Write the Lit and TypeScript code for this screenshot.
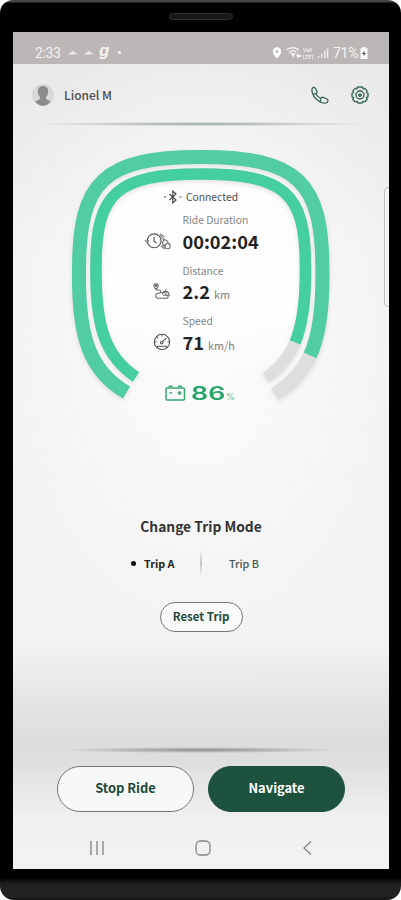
import { LitElement, html, svg, css } from "lit";
import { customElement, property } from "lit/decorators.js";

const durationIcon = svg`
  <svg width="28" height="19" viewBox="0 0 28 19" fill="none" stroke="#777" stroke-width="1.100">
    <circle cx="10.500" cy="8.800" r="7.200" stroke="#555"/><path stroke="#444" d="M10.500 4.500v4.800l2.500 2"/>
    <path d="M.8 8.200l2.400 2.400 2-2.600M17 3l4 5M16.500 1.500l5 3.500M20 7l4 2 2 4M18.500 9.500l2 5M20 6.500v4"/>
    <circle cx="24.500" cy="14.200" r="2.800"/><path d="M18 14.500l3 2.500 1.500-4z"/>
  </svg>`;
const distanceIcon = svg`
  <svg width="18" height="18" viewBox="0 0 18 18" fill="none" stroke="#666" stroke-width="1.100">
    <path d="M3 6.500C1.300 4.800 1 4 1 3a2 2 0 0 1 4.200 0c0 1-.6 2-2.200 3.500z"/><circle cx="3.100" cy="3" r=".6"/>
    <path d="M3.500 7h2.800c2 0 2 3.300-.3 3.300H4.800c-2.500 0-2.500 5 0 5h8.400c2.300 0 2.300-1.800 1.300-3"/>
    <path d="M9.500 11.500a3.200 3.200 0 0 1 6.400 0M8.500 9.500h3l1.500-3M10 12.300h7M13 8v4"/>
  </svg>`;
const speedIcon = svg`
  <svg width="18" height="18" viewBox="0 0 18 18" fill="none" stroke="#555" stroke-width="1.100">
    <circle cx="9" cy="9" r="7.700"/><circle cx="8.600" cy="9.700" r="1.200"/>
    <path d="M9.500 8.800l4-4M4.500 15v-1.800h9V15M9 1.500v2M1.500 9h2M14.500 9h2M3.800 3.800l1.300 1.300"/>
  </svg>`;

@customElement("status-bar")
class StatusBar extends LitElement {
  static styles = css`
    :host { display: flex; height: 32px; box-sizing: border-box; padding: 8px 21px 0 22px; background: #bbb7b6;
      color: #f5f3f2; font: 14px/24px Roboto, sans-serif; justify-content: space-between; }
    .side { display: flex; align-items: center; height: 26px; }
    .time { letter-spacing: -0.4px; width: 32px; }
    .g { font: italic 700 17px/20px "Liberation Sans", sans-serif; width: 19px; margin-top: -5px; }
    .dot { width: 3px; height: 3px; border-radius: 50%; background: #f8f6f5; margin-top: -1px; }
    .net { display: flex; flex-direction: column; gap: 1px; font: 700 5px/6px Roboto, sans-serif; margin-left: -1px; width: 15px; opacity: .9; }
    .pct { margin: 0 1px 0 4px; letter-spacing: -0.3px; width: 26px; }
  `;
  render() {
    const bird = svg`<svg width="16" height="10" viewBox="0 0 16 10" fill="#f2f0ef"><path d="M0 6.500L3.500 5 6 2.600l.8 2 2.700.2v1.500z"/></svg>`;
    return html`
      <div class="side"><span class="time">2:33</span>${bird}${bird}<span class="g">g</span><i class="dot"></i></div>
      <div class="side">
        <svg width="10" height="14" viewBox="0 0 10 14"><path fill="#fff" fill-rule="evenodd" d="M5 1.200A4.200 4.200 0 0 0 .8 5.400C.8 8.300 5 12.500 5 12.500s4.200-4.200 4.200-7.100A4.200 4.200 0 0 0 5 1.200zm0 2.700a1.500 1.500 0 1 1 0 3 1.500 1.500 0 0 1 0-3z"/></svg>
        <svg width="22" height="14" viewBox="0 0 22 14" fill="none" stroke="#f3f1f0" stroke-width="1.400"><path d="M4.500 4c3.500-3 9-3 12.500 0M7 6.300c2.500-2 5-2 7.500 0"/><path fill="#f3f1f0" stroke="none" d="M8 7l5.500 0-2 4.500zM14 9.500l2.500-2.500v2h3v2h-3v2z"/></svg>
        <span class="net"><span>VoII</span><span>LTE1</span></span>
        <svg width="11" height="12" viewBox="0 0 11 12" fill="#e9e7e6"><path d="M0 9h1.500v2H0zM3 7h1.500v4H3zM6 4h1.500v7H6zM8.700 1.500h1.600V11H8.700z"/></svg>
        <span class="pct">71%</span>
        <svg width="8" height="12" viewBox="0 0 8 12"><path fill="#fff" d="M2.500 0h3v1.200H7.500V12h-7V1.200h2z"/><path fill="#555" d="M4.400 3.500L2 7h1.700l-.3 2.700L6 6H4.200z"/></svg>
      </div>`;
  }
}

@customElement("profile-header")
class ProfileHeader extends LitElement {
  static styles = css`
    :host { display: flex; align-items: center; height: 62px; box-sizing: border-box; padding: 0 20px 0 19px; }
    .name { flex: 1; margin-left: 10px; font: 500 12px/20px "Noto Sans CJK SC", sans-serif; color: #4f4f4f; }
    .gear { margin-left: 22px; }
  `;
  render() {
    return html`
      <svg width="22" height="24" viewBox="0 0 22 24"><circle cx="11" cy="12" r="11" fill="#d9d9d9"/><path fill="#8c8c8c" d="M11 3c3.300 0 5.200 2.200 5.200 5.300 0 2.700-1 4.700-2.200 5.800v2l4.700 2.400A10.500 10.500 0 0 1 11 22.800a10.500 10.500 0 0 1-7.700-4.300L8 16.100v-2C6.800 13 5.800 11 5.800 8.300 5.800 5.200 7.700 3 11 3z"/></svg>
      <span class="name">Lionel M</span>
      <svg width="18" height="18" viewBox="0 0 18 18" fill="none" stroke="#3c685b" stroke-width="1.300" stroke-linejoin="round"><path d="M1 3C1.500 1.200 3.500 1 4.300 2.300L6 5.500C6.500 7 5.500 7.500 4.800 7.800 5.800 9.800 7.500 11.500 9.800 12.500 10.300 11.500 11 11 12.300 11.400L16 13c1.500.8 1 2.500.2 3.200C14 17.800 10 17 7 14.500 3.500 12 .3 7 1 3zM4.800 7.800C4 8 3 8 2.200 7.500M9.800 12.500C9.300 13.500 9.300 14.500 9.800 16"/></svg>
      <svg class="gear" width="18" height="18" viewBox="0 0 18 18" fill="none" stroke="#3c685b" stroke-width="1.400" stroke-linejoin="round"><path d="M6.500 1h5l.6 1.800 1.700-.4 2.300 2.500-.6 1.700L17 7.300v3.500l-1.500.7.6 2-2.400 2.400-1.700-.6L11.200 17H6.800L6 15.300l-1.800.6-2.400-2.400.7-2L1 10.800V7.300l1.500-.7-.6-1.700 2.300-2.500 1.700.4z"/><circle cx="9" cy="9" r="4"/><path d="M7.500 9.200L9 7.800l1.500 1.400L9 10.500z"/></svg>`;
  }
}

@customElement("ride-metric")
class RideMetric extends LitElement {
  @property() label = "";
  @property() value = "";
  @property() unit = "";
  @property({ attribute: false }) icon: unknown;
  static styles = css`
    :host { display: grid; grid-template-columns: 27px 1fr; column-gap: 12px; grid-template-rows: 17.500px 33px; height: 50.500px; }
    .label { grid-column: 2; font: 400 10.300px/18px "Noto Sans CJK SC", sans-serif; color: #858585; margin-left: -.5px; }
    .icon { display: flex; justify-content: flex-end; align-items: center; height: 25px; }
    .value { font: 700 18.200px/24px "Noto Sans CJK SC", sans-serif; color: #222; white-space: nowrap; margin-left: -.5px; }
    .unit { font-weight: 400; font-size: 10.800px; color: #808080; }
  `;
  render() {
    return html`<span class="label">${this.label}</span><span class="icon">${this.icon}</span>
      <span class="value">${this.value}${this.unit ? html` <span class="unit">${this.unit}</span>` : ""}</span>`;
  }
}

@customElement("ride-gauge")
class RideGauge extends LitElement {
  static styles = css`
    :host { display: grid; height: 290px; }
    .dial, .info { grid-area: 1 / 1; }
    .dial { display: block; }
    .rings { filter: drop-shadow(0 2px 2px rgba(0,0,0,.1)); }
    .info { z-index: 1; display: flex; flex-direction: column; padding: 62px 0 0 131px; }
    .link { display: flex; align-items: center; height: 18px; margin: 0 0 5px 19px; gap: 3px;
      font: 400 10.300px/18px "Noto Sans CJK SC", sans-serif; color: #4d4d4d; }
    .battery { display: flex; align-items: center; margin: 19px 0 0 21px; height: 22px; color: #27a468; }
    .level { font: 600 18.500px/22px Inter, "Liberation Sans", sans-serif; width: 35px; margin-left: 5px; }
    .wide { display: inline-block; transform: scaleX(1.450); transform-origin: 0 50%; }
    .sign { font: 400 9px/10px Inter, sans-serif; margin-top: 9px; color: #60bd91; }
  `;
  render() {
    const outer = "M126.500 392.500C90 371 78 338 79 270C79 182 103 157 200.700 157S322.400 182 322.400 270C323.400 338 311.400 372 274.700 394";
    const inner = "M136 377C106 357 95 328 96 265C96 193 117 174 200.700 174S305.400 193 305.400 265C306.400 328 295 358 266 377.500";
    return html`
      <svg class="dial" width="376" height="290" viewBox="13 126 376 290" fill="none">
        <defs><linearGradient id="face" x1="0" y1="0" x2="0" y2="1"><stop offset=".7" stop-color="#fff" stop-opacity=".8"/><stop offset="1" stop-color="#fff" stop-opacity="0"/></linearGradient></defs>
        <path fill="url(#face)" d="${inner}Z"/>
        <path stroke="#fafafa" stroke-width="8" d="M131 385C98 364 86 335 87 270C87 187 110 165.500 200.700 165.500S314 187 314 270C315 335 303 365 270 386"/>
        <g class="rings">
        <path stroke="#dedede" stroke-width="14" d=${outer}/>
        <path stroke="#dedede" stroke-width="11.500" d=${inner}/>
        <path stroke="#51cca5" stroke-width="14" pathLength="100" stroke-dasharray="92.100 100" d=${outer}/>
        <path stroke="#45ce9e" stroke-width="11.500" pathLength="100" stroke-dasharray="92 100" d=${inner}/>
        </g>
      </svg>
      <div class="info">
        <div class="link">
          <svg width="20" height="16" viewBox="0 0 20 16" fill="none" stroke="#444" stroke-width="1.100"><path d="M6.500 5l6.500 6-3.200 3V2L13 5l-6.500 6M1 8h2M16.500 8h2"/></svg>
          Connected
        </div>
        <ride-metric label="Ride Duration" value="00:02:04" .icon=${durationIcon}></ride-metric>
        <ride-metric label="Distance" value="2.2" unit="km" .icon=${distanceIcon}></ride-metric>
        <ride-metric label="Speed" value="71" unit="km/h" .icon=${speedIcon}></ride-metric>
        <div class="battery">
          <svg width="21" height="16" viewBox="0 0 21 16" fill="none" stroke="#36a873" stroke-width="1.500"><rect x="1" y="3" width="18.500" height="12" rx="1"/><path d="M3.500 1.300h4M13 1.300h4M4.500 8h2.500M12.500 8h4M14.500 6v4"/></svg>
          <span class="level"><span class="wide">86</span></span><span class="sign">%</span>
        </div>
      </div>`;
  }
}

@customElement("trip-mode")
class TripMode extends LitElement {
  static styles = css`
    :host { display: flex; flex-direction: column; align-items: center; font-family: "Noto Sans CJK SC", sans-serif; padding-top: 98px; height: 331px; box-sizing: border-box; }
    .title { font-weight: 700; font-size: 13.800px; line-height: 24px; color: #333; }
    .modes { display: flex; align-items: center; height: 26px; margin-top: 12px; font-size: 10.800px; line-height: 26px; width: 140px; }
    .bullet { width: 5px; height: 5px; border-radius: 50%; background: #111; margin-right: 8px; }
    .on { color: #222; font-weight: 700; width: 56px; }
    .off { color: #45554f; font-weight: 500; margin-left: 27px; white-space: nowrap; }
    .bar { width: 2px; height: 26px; background: linear-gradient(transparent, #c4c4c4 50%, transparent); }
    .reset { box-sizing: border-box; width: 83px; height: 30px; border: 1px solid #777; border-radius: 15px; margin-top: 26px;
      background: #f8f9f8; color: #1d4939; font: 700 11.500px/26px "Noto Sans CJK SC", sans-serif; padding: 0 0 2px; }
  `;
  render() {
    return html`<div class="title">Change Trip Mode</div>
      <div class="modes"><i class="bullet"></i><span class="on">Trip A</span><i class="bar"></i><span class="off">Trip B</span></div>
      <button class="reset">Reset Trip</button>`;
  }
}

@customElement("app-root")
class AppRoot extends LitElement {
  static styles = css`
    :host { display: block; width: 401px; height: 900px; background: #fff; }
    .device { position: relative; display: flex; flex-direction: column; box-sizing: border-box; width: 401px; height: 900px; padding: 0 12px 0 13px; background: linear-gradient(#444 0 2px, #000 3px 869px, #000 878px, #202020 884px, #242424 896px, #111); border-radius: 13px 13px 14px 14px; overflow: hidden; }
    .top { height: 32px; display: flex; justify-content: center; }
    .speaker { box-sizing: border-box; width: 64px; height: 7px; margin-top: 13px; border-radius: 4px; border: 1px solid #303030; background: #181818; }
    .screen { width: 376px; height: 837px; display: flex; flex-direction: column;
      background: radial-gradient(ellipse 220px 330px at 50% 36%, rgba(255,255,255,.8), rgba(255,255,255,.35) 60%, transparent),
        linear-gradient(#e9e9e9 32px, #ececec 100px, #f1f1f1 220px, #f2f2f2 615px, #e5e5e5 665px, #dcdcdc 710px, #dedede 728px, #f0f0f0 786px, #f2f2f2); }
    .rule { height: 5px; margin: -5px 20px 0; background: radial-gradient(ellipse 50% 2px at 50% 3px, #93a09c, transparent); }
    .foot-rule { height: 6px; margin: 0 50px; background: radial-gradient(ellipse 50% 3px at 50% 3px, #8c8c8c, transparent); }
    .actions { display: flex; gap: 14px; padding: 13px 0 0 44px; }
    .action { box-sizing: border-box; width: 137px; height: 46px; border-radius: 23px; padding: 0 0 2px; border: 1px solid #777; background: #f7f9f8; color: #1d4939; font: 700 12.900px/42px "Noto Sans CJK SC", sans-serif; }
    .primary { background: #1d523f; border-color: #1d523f; color: #fff; }
    .nav { display: flex; justify-content: space-between; align-items: center; padding: 26px 76px 0; height: 20px; }
    .handle { position: absolute; right: 11px; top: 187px; width: 6px; height: 120px; box-sizing: border-box; border: 1px solid #bebebe; border-right: 0; border-radius: 5px 0 0 5px; background: #f4f4f4; clip-path: inset(0 1px 0 0); }
  `;
  render() {
    return html`<div class="device">
      <div class="top"><div class="speaker"></div></div>
      <main class="screen">
        <status-bar></status-bar>
        <profile-header></profile-header>
        <div class="rule"></div>
        <ride-gauge></ride-gauge>
        <trip-mode></trip-mode>
        <div class="foot-rule"></div>
        <div class="actions"><button class="action">Stop Ride</button><button class="action primary">Navigate</button></div>
        <div class="nav">
          <svg width="16" height="16" viewBox="0 0 16 16" stroke="#8a8a8a" stroke-width="1.400"><path d="M2 1v14M8 1v14M14 1v14"/></svg>
          <svg width="16" height="16" viewBox="0 0 16 16" fill="none" stroke="#858585" stroke-width="1.300"><rect x="1" y="1" width="14" height="14" rx="4.500"/></svg>
          <svg width="12" height="16" viewBox="0 0 12 16" fill="none" stroke="#858585" stroke-width="1.300"><path d="M10 1.500L3 8l7 6.500"/></svg>
        </div>
      </main>
      <div class="handle"></div>
    </div>`;
  }
}
